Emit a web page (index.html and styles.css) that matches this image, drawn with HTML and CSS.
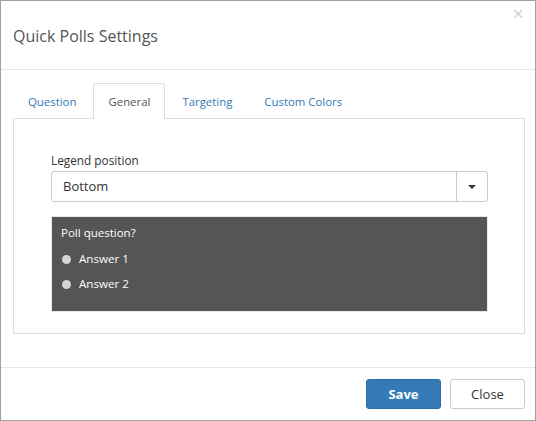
FILE: index.html
```html
<!DOCTYPE html>
<html>
<head>
<meta charset="utf-8">
<link rel="stylesheet" href="styles.css">
</head>
<body>
<div class="modal">
  <div class="header">
    <h4 class="title">Quick Polls Settings</h4>
    <span class="close-x">&times;</span>
  </div>
  <div class="body">
    <ul class="tabs">
      <li class="tab">Question</li>
      <li class="tab active">General</li>
      <li class="tab">Targeting</li>
      <li class="tab">Custom Colors</li>
    </ul>
    <div class="panel">
      <label class="label">Legend position</label>
      <div class="select">
        <span class="select-value">Bottom</span>
        <span class="select-btn"><span class="caret"></span></span>
      </div>
      <div class="preview">
        <div class="question">Poll question?</div>
        <div class="answer"><span class="radio"></span>Answer 1</div>
        <div class="answer"><span class="radio"></span>Answer 2</div>
      </div>
    </div>
  </div>
  <div class="footer">
    <button class="btn btn-primary">Save</button>
    <button class="btn btn-default">Close</button>
  </div>
</div>
</body>
</html>
```
FILE: styles.css
```css
* { box-sizing: border-box; }
html, body { margin: 0; padding: 0; background: #fff; }
body { font-family: "Open Sans", "Noto Sans", sans-serif; color: #333; font-size: 13px; }
.modal {
  width: 536px; height: 421px;
  border: 1px solid #a0a0a0;
  display: flex; flex-direction: column;
  position: relative;
}
.header {
  height: 69px;
  border-bottom: 1px solid #e5e5e5;
  padding: 2px 12px 0;
  display: flex; align-items: center;
}
.title { margin: 0; font-size: 16px; font-weight: 400; color: #555; }
.close-x {
  position: absolute; right: 11px; top: 2px;
  font-size: 20px; color: #cfcfcf; line-height: 21px;
}
.body { flex: 1; padding: 13px 10px 0 12px; }
.tabs { list-style: none; margin: 0; padding: 0; display: flex; height: 35px; }
.tab {
  padding: 0 14px; line-height: 35px; color: #337ab7; font-size: 11.4px;
  border: 1px solid transparent; border-bottom: none;
  border-radius: 3px 3px 0 0; margin-right: 2px;
}
.tab.active {
  color: #555; border-color: #ddd; background: #fff;
  position: relative; z-index: 1; height: 36px;
}
.panel {
  border: 1px solid #ddd;
  height: 216px;
  padding: 32px 36px 0 37px;
}
.label { display: block; color: #333; font-size: 11.8px; line-height: 18px; margin-bottom: 2px; }
.select {
  display: flex; height: 31px;
  border: 1px solid #ccc; border-radius: 3px;
}
.select-value { flex: 1; padding: 0 11px; line-height: 29px; font-size: 13px; color: #333; }
.select-btn {
  width: 31px; border-left: 1px solid #ccc;
  display: flex; align-items: center; justify-content: center;
}
.caret { width: 0; height: 0; border-left: 4px solid transparent; border-right: 4px solid transparent; border-top: 4px solid #333; }
.preview {
  margin-top: 14px; height: 96px;
  background: #555; border: 1px solid #e8e8e8;
  padding: 8px 9px; color: #fff;
}
.question { font-size: 11.5px; line-height: 16px; margin-bottom: 10px; }
.answer { display: flex; align-items: center; font-size: 11.6px; line-height: 16px; margin-bottom: 9px; }
.radio { width: 9px; height: 9px; border-radius: 50%; background: #d6d6d6; margin: 0 8px 0 1px; }
.footer {
  border-top: 1px solid #e5e5e5; height: 53px;
  display: flex; justify-content: flex-end; align-items: center;
  padding: 0 10px; gap: 9px;
}
.btn {
  font-family: inherit; font-size: 13px; height: 30px; width: 75px;
  border-radius: 3px; border: 1px solid #ccc; padding: 0;
}
.btn-primary { background: #337ab7; border-color: #2e6da4; color: #fff; font-weight: 700; }
.btn-default { background: #fff; color: #333; }
```
